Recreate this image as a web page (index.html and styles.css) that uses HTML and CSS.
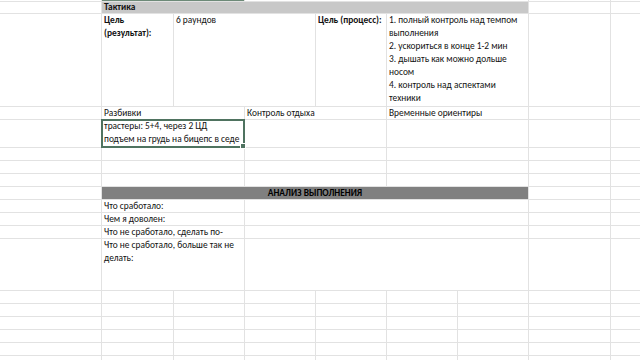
FILE: index.html
```html
<!DOCTYPE html>
<html lang="ru">
<head>
<meta charset="utf-8">
<title>Тактика</title>
<link rel="stylesheet" href="styles.css">
</head>
<body>
<div class="sheet">
  <!-- row 0 -->
  <div class="c r0"></div><div class="c r0 sel-top s2"></div><div class="c r0 s4"></div><div class="c r0"></div><div class="c r0"></div>
  <!-- row 1 -->
  <div class="c"></div><div class="c head s6 b">Тактика</div><div class="c"></div><div class="c"></div>
  <!-- row 2 -->
  <div class="c"></div>
  <div class="c top b">Цель<br>(результат):</div>
  <div class="c top s2">6 раундов</div>
  <div class="c top b nw">Цель (процесс):</div>
  <div class="c top s2 nw">1. полный контроль над темпом<br>выполнения<br>2. ускориться в конце 1-2 мин<br>3. дышать как можно дольше<br>носом<br>4. контроль над аспектами<br>техники</div>
  <div class="c"></div><div class="c"></div>
  <!-- row 3 -->
  <div class="c"></div><div class="c s2">Разбивки</div><div class="c s2">Контроль отдыха</div><div class="c s2">Временные ориентиры</div><div class="c"></div><div class="c"></div>
  <!-- row 4 -->
  <div class="c"></div><div class="c s2 top nw selected">трастеры: 5+4, через 2 ЦД<br>подъем на грудь на бицепс в седе</div><div class="c s2"></div><div class="c s2"></div><div class="c"></div><div class="c"></div>
  <!-- rows 5-7 -->
  <div class="c"></div><div class="c s2"></div><div class="c s2"></div><div class="c s2"></div><div class="c"></div><div class="c"></div>
  <div class="c"></div><div class="c s2"></div><div class="c s2"></div><div class="c s2"></div><div class="c"></div><div class="c"></div>
  <div class="c"></div><div class="c s2"></div><div class="c s2"></div><div class="c s2"></div><div class="c"></div><div class="c"></div>
  <!-- row 8 -->
  <div class="c"></div><div class="c dark s6 b">АНАЛИЗ ВЫПОЛНЕНИЯ</div><div class="c"></div><div class="c"></div>
  <!-- rows 9-11 -->
  <div class="c"></div><div class="c s2 nw">Что сработало:</div><div class="c s4"></div><div class="c"></div><div class="c"></div>
  <div class="c"></div><div class="c s2 nw">Чем я доволен:</div><div class="c s4"></div><div class="c"></div><div class="c"></div>
  <div class="c"></div><div class="c s2 nw">Что не сработало, сделать по-</div><div class="c s4"></div><div class="c"></div><div class="c"></div>
  <!-- row 12 -->
  <div class="c"></div><div class="c s2 top nw">Что не сработало, больше так не<br>делать:</div><div class="c s4"></div><div class="c"></div><div class="c"></div>
  <!-- rows 13-18 -->
  <div class="c"></div><div class="c"></div><div class="c"></div><div class="c"></div><div class="c"></div><div class="c"></div><div class="c"></div><div class="c"></div><div class="c"></div>
  <div class="c"></div><div class="c"></div><div class="c"></div><div class="c"></div><div class="c"></div><div class="c"></div><div class="c"></div><div class="c"></div><div class="c"></div>
  <div class="c"></div><div class="c"></div><div class="c"></div><div class="c"></div><div class="c"></div><div class="c"></div><div class="c"></div><div class="c"></div><div class="c"></div>
  <div class="c"></div><div class="c"></div><div class="c"></div><div class="c"></div><div class="c"></div><div class="c"></div><div class="c"></div><div class="c"></div><div class="c"></div>
  <div class="c"></div><div class="c"></div><div class="c"></div><div class="c"></div><div class="c"></div><div class="c"></div><div class="c"></div><div class="c"></div><div class="c"></div>
  <div class="c"></div><div class="c"></div><div class="c"></div><div class="c"></div><div class="c"></div><div class="c"></div><div class="c"></div><div class="c"></div><div class="c"></div>
</div>
</body>
</html>
```

FILE: styles.css
```css
html, body {
  margin: 0;
  padding: 0;
  background: #ffffff;
  overflow: hidden;
}

.sheet {
  width: 640px;
  height: 360px;
  overflow: hidden;
  display: grid;
  grid-template-columns: 101px 71px 70px 70px 70px 70px 70px 81px 40px;
  grid-template-rows: 1px 11px 92px 12px 27px 12px 12px 12px 12px 12px 12px 12px 51px 12px 12px 12px 12px 12px 12px;
  gap: 1px;
  background: #e2e2e2;
  font-family: Carlito, Lato, "Liberation Sans", sans-serif;
  font-size: 9.4px;
  line-height: 13px;
  color: #111111;
}

.c {
  background: #ffffff;
  padding: 0 2px;
  display: flex;
  align-items: center;
  overflow: hidden;
  min-width: 0;
  min-height: 0;
}

.s2 { grid-column: span 2; }
.s4 { grid-column: span 4; }
.s6 { grid-column: span 6; }

.r0 { background: #ffffff; }
.sel-top { background: #6d8a78; }

.b { font-weight: 700; }
.nw { white-space: nowrap; }

.top {
  align-items: flex-start;
  display: block;
}

.head {
  background: #c8c8c8;
}

.dark {
  background: #808080;
  justify-content: center;
  color: #000000;
}

.selected {
  position: relative;
  overflow: visible;
  z-index: 1;
}

.selected::after {
  content: "";
  position: absolute;
  left: -1px;
  right: -1px;
  top: -1px;
  bottom: -1px;
  border: 2px solid #4f7360;
  pointer-events: none;
}

.selected::before {
  content: "";
  position: absolute;
  right: -2px;
  bottom: -2px;
  width: 4px;
  height: 4px;
  background: #4f7360;
  border: 1px solid #ffffff;
  z-index: 2;
}
```
